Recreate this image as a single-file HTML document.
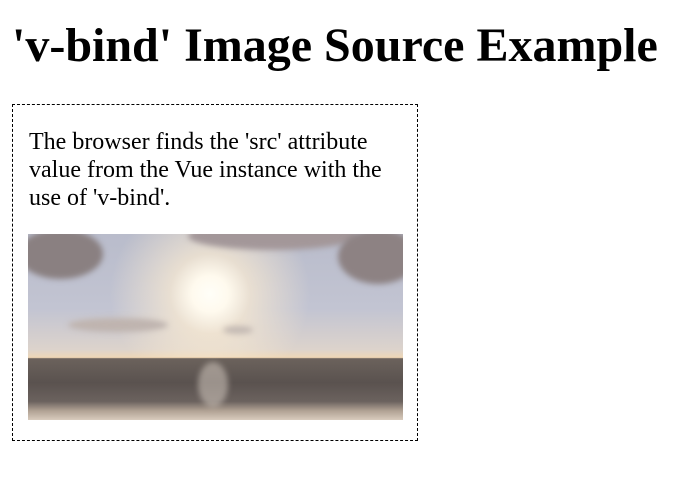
<!DOCTYPE html>
<html><head><style>
body{margin:0;background:#fff;font-family:"Liberation Serif","Times New Roman",serif;color:#000}
h1{position:absolute;left:12px;top:18px;margin:0;font-size:48px;font-weight:bold;line-height:56px;white-space:nowrap;font-family:"Liberation Serif",serif}
.box{position:absolute;left:12px;top:104px;width:404px;height:335px;border:1px dashed #000}
p{position:absolute;left:16px;top:23px;margin:0;width:366px;font-size:24px;line-height:28px;font-family:"Liberation Serif",serif}
.img{position:absolute;left:15px;top:129px;width:375px;height:186px;overflow:hidden;
background:linear-gradient(#b9bccb 0,#c2c4d2 40%,#dcd3cc 62%,#ecd6b8 66%,#e8cfae 66.5%,#6b625c 67%,#5a524f 80%,#6b625e 90%,#b0a193 95%,#d8cbbd 100%);}
.sky{position:absolute;left:0;top:0;width:375px;height:123px;background:radial-gradient(circle at 182px 60px,#fffef8 0,#fffaee 18px,rgba(250,235,210,.7) 40px,rgba(230,215,210,0) 100px)}
.c{position:absolute;border-radius:50%;filter:blur(3px)}
</style></head><body>
<h1>'v-bind' Image Source Example</h1>
<div class="box">
<p>The browser finds the 'src' attribute value from the Vue instance with the use of 'v-bind'.</p>
<div class="img">
<div class="sky"></div>
<div class="c" style="left:-10px;top:-5px;width:85px;height:50px;background:#8a8081"></div>
<div class="c" style="left:160px;top:-12px;width:170px;height:28px;background:#a39799"></div>
<div class="c" style="left:310px;top:-5px;width:80px;height:55px;background:#8d8283"></div>
<div class="c" style="left:40px;top:84px;width:100px;height:14px;background:#bfb4af"></div>
<div class="c" style="left:195px;top:92px;width:30px;height:8px;background:#c3b9b3"></div>
<div class="c" style="left:170px;top:128px;width:30px;height:45px;background:rgba(220,210,200,.5)"></div>
</div>
</div>
</body></html>
